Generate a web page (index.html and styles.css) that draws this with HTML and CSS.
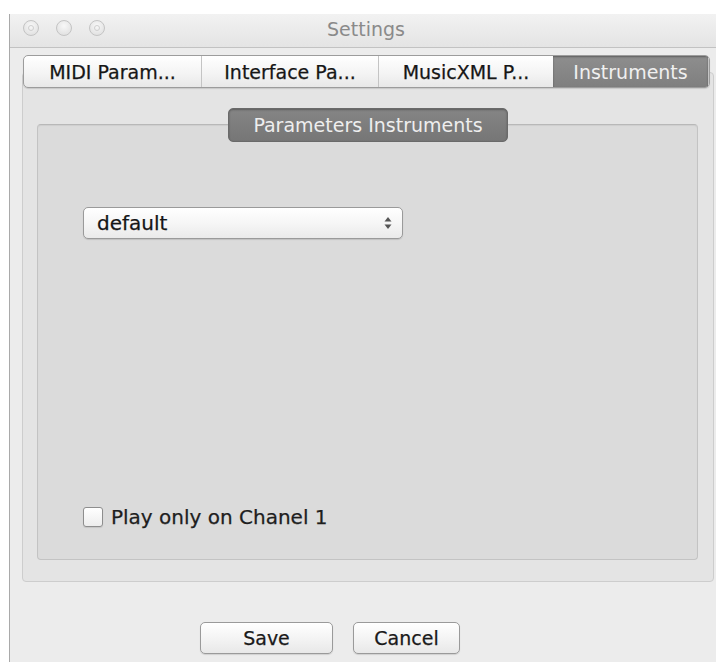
FILE: index.html
```html
<!DOCTYPE html>
<html lang="en">
<head>
<meta charset="utf-8">
<title>Settings</title>
<link rel="stylesheet" href="styles.css">
</head>
<body>
<div class="window">
  <div class="titlebar">
    <div class="lights">
      <span class="light"><span class="mark"></span></span>
      <span class="light"></span>
      <span class="light"><span class="mark"></span></span>
    </div>
    <div class="title">Settings</div>
  </div>

  <div class="content">
    <div class="tabbar">
      <div class="tab tab-midi">MIDI Param...</div>
      <div class="tab tab-iface">Interface Pa...</div>
      <div class="tab tab-xml">MusicXML P...</div>
      <div class="tab tab-instr selected">Instruments</div>
    </div>

    <div class="pane">
      <div class="group">
        <div class="group-title">Parameters Instruments</div>
        <div class="popup">
          <span class="popup-text">default</span>
          <svg class="popup-arrows" width="8" height="14" viewBox="0 0 8 14">
            <path d="M4 1 L7.5 5.5 L0.5 5.5 Z" fill="#555"/>
            <path d="M4 13 L7.5 8.5 L0.5 8.5 Z" fill="#555"/>
          </svg>
        </div>
        <div class="spacer"></div>
        <label class="check">
          <span class="box"></span>
          <span class="check-label">Play only on Chanel 1</span>
        </label>
      </div>
    </div>

    <div class="buttons">
      <button class="btn btn-save">Save</button>
      <button class="btn btn-cancel">Cancel</button>
    </div>
  </div>
</div>
</body>
</html>
```

FILE: styles.css
```css
html, body {
  margin: 0;
  padding: 0;
  background: #ffffff;
  width: 716px;
  height: 662px;
  overflow: hidden;
}

body {
  font-family: "DejaVu Sans", "Liberation Sans", sans-serif;
  color: #1e1e1e;
}

.window {
  margin: 14px 0 0 9px;
  width: 707px;
  height: 648px;
  box-sizing: border-box;
  background: #ececec;
  border-left: 1px solid #a9a9a9;
  display: flex;
  flex-direction: column;
}

/* title bar with the three inactive window buttons */
.titlebar {
  height: 34px;
  box-sizing: border-box;
  flex: none;
  background: linear-gradient(#f2f2f2, #e4e4e4);
  border-bottom: 1px solid #c2c2c2;
  display: flex;
  align-items: center;
  position: relative;
}

.lights {
  display: flex;
  gap: 17px;
  padding-left: 13px;
  margin-top: -5px;
}

.light {
  width: 14px;
  height: 14px;
  border-radius: 50%;
  border: 1px solid #c4c4c4;
  background: radial-gradient(circle at 50% 35%, #f8f8f8, #dcdcdc);
  display: flex;
  align-items: center;
  justify-content: center;
}

.mark {
  width: 4px;
  height: 4px;
  border-radius: 50%;
  border: 1px solid #cfcfcf;
}

.title {
  position: absolute;
  left: 0;
  right: 0;
  top: 4px;
  text-align: center;
  font-size: 19px;
  color: #8a8a8a;
  padding-left: 6px;
}

.content {
  flex: 1;
  display: flex;
  flex-direction: column;
  padding: 7px 2px 0 12px;
}

/* segmented tab bar */
.tabbar {
  position: relative;
  z-index: 1;
  margin-left: 1px;
  width: 687px;
  height: 33px;
  box-sizing: border-box;
  display: flex;
  border: 1px solid #9c9c9c;
  border-radius: 5px;
  background: linear-gradient(#ffffff, #f3f3f3 60%, #e8e8e8);
  box-shadow: 0 1px 1px rgba(0, 0, 0, 0.12);
  overflow: hidden;
}

.tab {
  display: flex;
  align-items: center;
  justify-content: center;
  font-size: 19px;
  color: #161616;
  -webkit-text-stroke: 0.25px #161616;
  border-right: 1px solid #c4c4c4;
  white-space: nowrap;
}

.tab-midi { width: 177px; }
.tab-iface { width: 176px; }
.tab-xml { width: 174px; border-right: none; }
.tab-instr { flex: 1; }

.tab.selected {
  background: linear-gradient(#8e8e8e, #7f7f7f);
  color: #f0f0f0;
  -webkit-text-stroke: 0;
  box-shadow: inset 0 1px 2px rgba(0, 0, 0, 0.35);
}

/* tab pane */
.pane {
  margin-top: -16px;
  height: 510px;
  box-sizing: border-box;
  flex: none;
  background: #e4e4e4;
  border: 1px solid #cdcdcd;
  border-radius: 4px;
  padding: 51px 15px 21px 14px;
  display: flex;
}

.group {
  flex: 1;
  position: relative;
  background: #dbdbdb;
  border: 1px solid #c3c3c3;
  border-top-color: #b8b8b8;
  border-radius: 4px;
  box-shadow: inset 0 1px 1px rgba(0, 0, 0, 0.06);
  display: flex;
  flex-direction: column;
  padding: 82px 0 30px 45px;
}

.group-title {
  position: absolute;
  top: -17px;
  left: 190px;
  width: 280px;
  height: 34px;
  box-sizing: border-box;
  display: flex;
  align-items: center;
  justify-content: center;
  background: linear-gradient(#858585, #767676);
  border: 1px solid #6a6a6a;
  border-radius: 5px;
  color: #eeeeee;
  font-size: 19px;
  white-space: nowrap;
  box-shadow: inset 0 1px 2px rgba(0, 0, 0, 0.3);
}

/* popup button */
.popup {
  width: 320px;
  height: 32px;
  box-sizing: border-box;
  display: flex;
  align-items: center;
  justify-content: space-between;
  padding: 0 10px 0 13px;
  background: linear-gradient(#ffffff, #f5f5f5 55%, #eaeaea);
  border: 1px solid #9a9a9a;
  border-radius: 5px;
  box-shadow: 0 1px 1px rgba(0, 0, 0, 0.12);
}

.popup-text {
  font-size: 20px;
  color: #151515;
  -webkit-text-stroke: 0.25px #151515;
}

.spacer { flex: 1; }

/* checkbox */
.check {
  display: flex;
  align-items: center;
  gap: 8px;
}

.box {
  width: 20px;
  height: 20px;
  box-sizing: border-box;
  border: 1px solid #8e8e8e;
  border-radius: 3px;
  background: linear-gradient(#ffffff, #ededed);
  box-shadow: 0 1px 1px rgba(0, 0, 0, 0.1);
}

.check-label {
  font-size: 20px;
  color: #1e1e1e;
  -webkit-text-stroke: 0.25px #1e1e1e;
}

/* dialog buttons */
.buttons {
  display: flex;
  gap: 20px;
  padding: 40px 0 0 178px;
}

.btn {
  height: 32px;
  box-sizing: border-box;
  font-family: "DejaVu Sans", "Liberation Sans", sans-serif;
  font-size: 19px;
  color: #1a1a1a;
  -webkit-text-stroke: 0.25px #1a1a1a;
  background: linear-gradient(#ffffff, #f3f3f3 55%, #e8e8e8);
  border: 1px solid #9a9a9a;
  border-radius: 5px;
  box-shadow: 0 1px 1px rgba(0, 0, 0, 0.12);
  padding: 0;
}

.btn-save { width: 133px; }
.btn-cancel { width: 107px; }
```
